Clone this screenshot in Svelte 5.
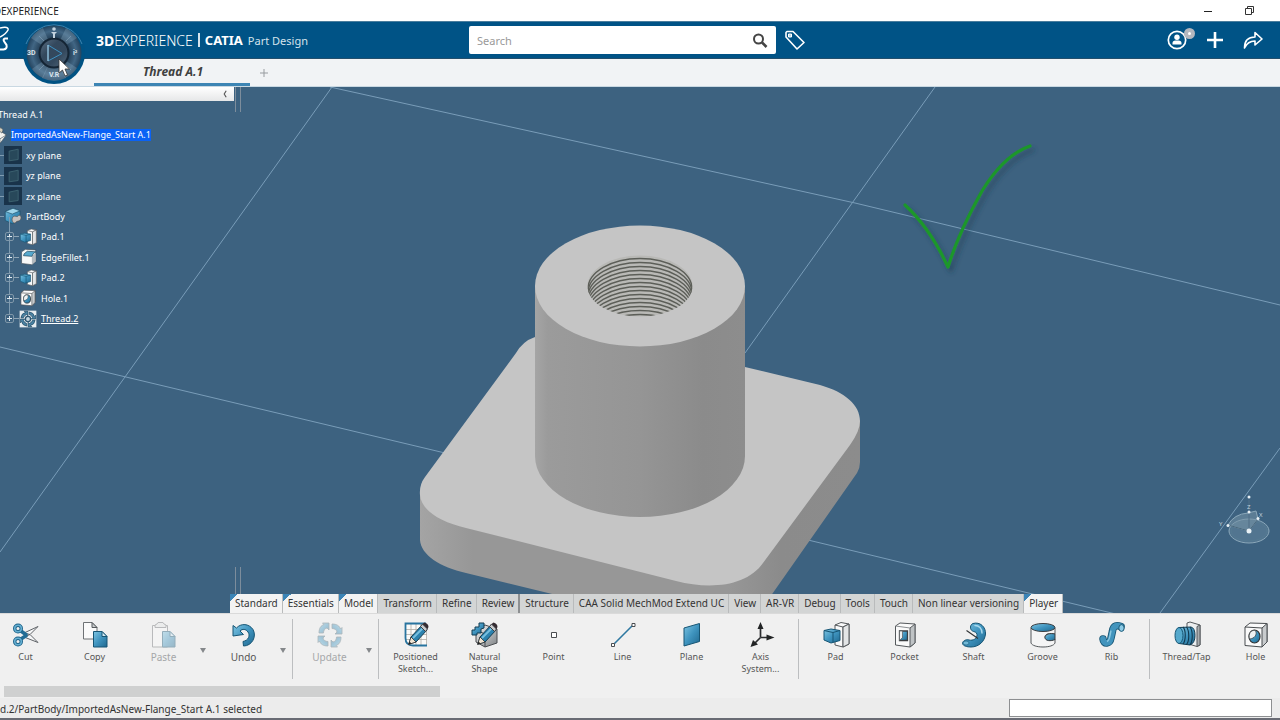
<script>
  const tree = [
    { label: 'Thread A.1', level: 0 },
    { label: 'ImportedAsNew-Flange_Start A.1', level: 1, icon: 'product', selected: true },
    { label: 'xy plane', level: 2, icon: 'datum' },
    { label: 'yz plane', level: 2, icon: 'datum' },
    { label: 'zx plane', level: 2, icon: 'datum' },
    { label: 'PartBody', level: 2, icon: 'body' },
    { label: 'Pad.1', level: 3, icon: 'pad' },
    { label: 'EdgeFillet.1', level: 3, icon: 'fillet' },
    { label: 'Pad.2', level: 3, icon: 'pad' },
    { label: 'Hole.1', level: 3, icon: 'hole' },
    { label: 'Thread.2', level: 3, icon: 'thread2', current: true }
  ];

  const sections = [
    { label: 'Standard', open: true },
    { label: 'Essentials', open: true },
    { label: 'Model', open: true },
    { label: 'Transform' },
    { label: 'Refine' },
    { label: 'Review', strong: true },
    { label: 'Structure' },
    { label: 'CAA Solid MechMod Extend UC' },
    { label: 'View' },
    { label: 'AR-VR' },
    { label: 'Debug' },
    { label: 'Tools' },
    { label: 'Touch' },
    { label: 'Non linear versioning' },
    { label: 'Player', open: true }
  ];

  const groups = [
    [
      { label: 'Cut', icon: 'cut' },
      { label: 'Copy', icon: 'copy' },
      { label: 'Paste', icon: 'paste', off: true, more: true },
      { label: 'Undo', icon: 'undo', large: true, more: true }
    ],
    [{ label: 'Update', icon: 'update', off: true, more: true }],
    [
      { label: 'Positioned Sketch...', icon: 'sketch' },
      { label: 'Natural Shape', icon: 'natural' },
      { label: 'Point', icon: 'point' },
      { label: 'Line', icon: 'line' },
      { label: 'Plane', icon: 'plane' },
      { label: 'Axis System...', icon: 'axis' }
    ],
    [
      { label: 'Pad', icon: 'pad' },
      { label: 'Pocket', icon: 'pocket' },
      { label: 'Shaft', icon: 'shaft' },
      { label: 'Groove', icon: 'groove' },
      { label: 'Rib', icon: 'rib' }
    ],
    [
      { label: 'Thread/Tap', icon: 'tap' },
      { label: 'Hole', icon: 'hole' }
    ]
  ];

  const threads = Array.from({ length: 15 }, (_, i) => 289 + i * 4);
</script>

{#snippet icon(name)}
  <svg class="icon" viewBox="0 0 28 28" aria-hidden="true">
    {#if name === 'cut'}
      <g fill="none" stroke="#606468" stroke-linejoin="round">
        <path d="M12 12 26 5.500 18 13.500zM12 16l14 5.500-8-8z" fill="#f6f7f8" />
        <path d="M9 10l6 4.500M9 18l6-4" stroke="#236d95" stroke-width="3.500" />
        <circle cx="6" cy="7.500" r="3.300" stroke="#1d638a" stroke-width="3.400" />
        <circle cx="6" cy="20.500" r="3.300" stroke="#1d638a" stroke-width="3.400" />
        <circle cx="6" cy="7.500" r="3.300" stroke="#67b0d2" stroke-width="1.600" />
        <circle cx="6" cy="20.500" r="3.300" stroke="#67b0d2" stroke-width="1.600" />
      </g>
    {:else if name === 'copy'}
      <path d="M2.500 1.500H11l5 5V18H2.500z" fill="#fafafa" stroke="#6e7275" />
      <path d="M11 1.500v5h5z" fill="#c9ccce" stroke="#55595c" />
      <path d="M12.500 10.500H21l5 5V26H12.500z" fill="url(#blue)" stroke="#165574" />
      <path d="M21 10.500v5h5z" fill="#d3ebf5" stroke="#165574" />
    {:else if name === 'paste'}
      <path d="M2.500 4.500h15V26h-15z" fill="#fafafa" stroke="#6e7275" />
      <path d="M5 6.500V4l2-1 1-1.500h5l1 1.500 2 1v2.500z" fill="#e5e7e8" stroke="#6e7275" />
      <path d="M12.500 10.500H20l5 5V26H12.500z" fill="url(#blue)" stroke="#165574" />
      <path d="M20 10.500v5h5z" fill="#d3ebf5" stroke="#165574" />
    {:else if name === 'undo'}
      <path d="M3 4.500 6.500 7C11 2 19 2.500 23 8.500c4 7-1 16.500-9.500 16.500l-.5-4.500c5.500-1 7.500-6 5-9.500-2-3-5.500-3.500-8-1l3.500 3.500L3 15z" fill="url(#blue)" stroke="#165574" stroke-linejoin="round" />
    {:else if name === 'update'}
      <g fill="url(#blue)" stroke="#4e6470" stroke-width=".8" stroke-linejoin="round">
        {#each [0, 90, 180, 270] as turn}
          <path d="M3 12c0-5 2-7.500 5-8.500L6.500 2H13v7l-2-2c-2 .5-3.500 2-3.500 5z" transform="rotate({turn} 14 14)" />
        {/each}
      </g>
    {:else if name === 'sketch'}
      <path d="M4 3.500h21v21H12c-5 0-8-3-8-8z" fill="#fbfaf8" />
      <path d="M9 3v20M14 3v22M19 3v22M24.500 3v22M3 8.500h22M3 13.500h22M3 18.500h22" stroke="#b1aca5" stroke-width=".8" />
      <path d="M24 2.500H3.500V17q0 7.500 7.500 7.500h14" fill="none" stroke="#28749f" stroke-width="1.800" />
      {@render pencil()}
    {:else if name === 'natural'}
      <path d="m5 8 9-4 12 4v14l-12 4-9-5z" fill="url(#steel)" stroke="#4a4d50" />
      <path d="m5 9 9 4 12-5M14 13v13" fill="none" stroke="#4a4d50" />
      <path d="M1 9h3V6h4V2h5v5l-3 1v4H6v2H1z" fill="url(#blue)" stroke="#123c52" stroke-linejoin="round" />
      {@render pencil()}
    {:else if name === 'point'}
      <path d="M11.500 11.500h5v5h-5z" fill="#fff" stroke="#4a4d50" />
    {:else if name === 'line'}
      <path d="M4 24 24 4" stroke="#2e78a1" stroke-width="1.600" />
      <path d="M2.500 22.500h3v3h-3zM23 2.500h3v3h-3z" fill="#fff" stroke="#4a4d50" />
    {:else if name === 'plane'}
      <path d="m6 7 15.500-4.500v18L6 25z" fill="url(#blue)" stroke="#165574" />
    {:else if name === 'axis'}
      <path d="M13.500 16V5M13.500 16.500H24M13.500 16.500 7 23" fill="none" stroke="#2b2d2f" stroke-width="1.700" />
      <path d="m13.500 1 3 7h-6zM27.500 16.500l-8-3v6zM3.500 26l2.500-7 5 4.500z" fill="#222425" />
    {:else if name === 'pad'}
      <path d="m13 4 6-2.500 8 1.500v20l-6 3-8-2z" fill="#fafafa" stroke="#55595c" />
      <path d="m13 4 8 2 6-3M21 6v20" fill="none" stroke="#55595c" />
      <path d="m21 6 6-3v20l-6 3z" fill="#e3e5e6" stroke="#55595c" />
      <path d="M2 9.500 9 8l9 1.500v10L9 22l-7-3z" fill="url(#blue)" stroke="#165574" />
      <path d="m2 9.500 9 2 7-2M11 11.500v10" fill="none" stroke="#165574" />
    {:else if name === 'pocket'}
      <path d="M4.500 5 9 2l15 1v19l-5 4-14.500-2z" fill="#fafafa" stroke="#55595c" stroke-linejoin="round" />
      <path d="m19 7 5-4v19l-5 4z" fill="#bfc3c5" stroke="#55595c" />
      <path d="m4.500 5 14.500 2" stroke="#8a8e91" />
      <path d="M8.500 10h8v9.500h-8z" fill="url(#blue)" stroke="#3b3e41" stroke-width="1.300" />
      <path d="m8.500 19.500 3.500-3.500h-.5V10h-3z" fill="#eef0f1" stroke="#55595c" stroke-width=".7" />
    {:else if name === 'shaft'}
      <path d="M13 2.500C20 .5 26 6 25.500 13S19 26 11 26c-4 0-8-1-8.500-3.500C2.500 20 6 18 9 19c4 1 8.500-1.500 8-5.500-.4-3-3-2.500-4.500-3.500-3-1.500-2.500-6.500.5-7.500z" fill="url(#blue)" stroke="#165574" />
      <path d="M15 4.500c4 0 7 3 7 7.500" fill="none" stroke="#a9d9ed" stroke-width="1.500" stroke-linecap="round" />
      <path d="m6.500 9.500 11.500 8" stroke="#303335" stroke-width="1.100" />
      <ellipse cx="6" cy="22" rx="3" ry="2" fill="#70b8d7" stroke="#165574" stroke-width=".6" />
    {:else if name === 'groove'}
      <path d="M2 7v15c1 2.500 6 4 12 4s11-1.500 12-4v-4c-4 2-10 1.500-10-2s5-4 10-3V7z" fill="#f5f5f5" stroke="#55595c" />
      <path d="M26 13c-5-1-10 0-10 3.500s6 4 10 2z" fill="url(#blue)" stroke="#3b3e41" />
      <ellipse cx="14" cy="6.500" rx="12" ry="4" fill="url(#blue)" stroke="#3b3e41" />
    {:else if name === 'rib'}
      <path d="M5 18c.5 6 7 5 8-1l1.500-7C15.500 4 19 4 23 5.500" fill="none" stroke="#165574" stroke-width="7.500" stroke-linecap="round" />
      <path d="M5 18c.5 6 7 5 8-1l1.500-7C15.500 4 19 4 23 5.500" fill="none" stroke="#4294bd" stroke-width="5.800" stroke-linecap="round" />
      <path d="M9 20.500c2-1 2.500-3 3-6l1-5" fill="none" stroke="#8cc9e2" stroke-width="1.400" />
      <ellipse cx="23.500" cy="7" rx="2.700" ry="3.400" fill="#8ccbe6" stroke="#165574" />
    {:else if name === 'tap'}
      <path d="m14 2 3-1 10 3v20l-3 1.500-10-3z" fill="#eceeef" stroke="#55595c" />
      <path d="m24 5.500 3-1.500v20l-3 1.500z" fill="#a9adb0" stroke="#55595c" />
      <path d="M6 6.500 18 6q4 1 4 8.500T17 24L6 22.500z" fill="url(#blue)" stroke="#123c52" />
      <path d="M10 6c3 3 3 13 0 17M13.500 6c3 4 3 14 0 17.500M17 6c3 4 3 14 0 18" fill="none" stroke="#10384e" stroke-width="1.100" />
      <ellipse cx="6" cy="14.500" rx="4" ry="8" fill="#55a9cd" stroke="#165574" />
    {:else if name === 'hole'}
      <path d="m3 6 5-4 17 .5V21l-5 5-17-1.500z" fill="#fafafa" stroke="#494d50" stroke-linejoin="round" />
      <path d="m20 7 5-4.500V21l-5 5z" fill="#c8cbcd" stroke="#494d50" />
      <path d="m3 6 17 1" stroke="#494d50" />
      <ellipse cx="12.500" cy="15.500" rx="5.500" ry="6.500" fill="url(#blue)" stroke="#303335" stroke-width="1.200" />
      <path d="M13.500 9.500c2 4.500-1 8-6 8.500-1.500-5 1.500-9.500 6-8.500z" fill="#eff2f3" stroke="#303335" stroke-width=".7" />
    {:else if name === 'datum'}
      <path d="M0 0h28v28H0z" fill="#19334a" />
      <path d="m8 8 14-3v16L8 23z" fill="#28485a" stroke="#3c6270" stroke-width="1.500" />
    {:else if name === 'body'}
      <path d="m2 7 12-5 11 4v14l-12 6-11-5z" fill="url(#blue)" stroke="#1c4c67" />
      <path d="m2 7 11 4 12-5-11-4z" fill="#9fd5ea" stroke="#1c4c67" />
      <path d="M13 17c3-6 7 0 9-3s6 1 4 5-6 2-8 5-7-2-5-7z" fill="#c6c2bf" stroke="#5b5350" />
    {:else if name === 'fillet'}
      <path d="m4 6 6-4 16 1v18l-6 5-16-2z" fill="#f7f8f8" stroke="#3d4a54" />
      <path d="m20 12 6-4v13l-6 5z" fill="#b3b9be" />
      <path d="m7 12 1-3 5-4 13 1-4 3-2 4z" fill="#56a8cd" stroke="#153c52" />
    {:else if name === 'thread2'}
      <path d="M1 1h26v26H1z" fill="#e8edf0" />
      <g fill="#4b83a3" stroke="#173e59" stroke-width="1">
        {#each [0, 90, 180, 270] as turn}
          <path d="M3 12q1-7 7-8l-2-2h6v7l-2-2q-4 1-5 5z" transform="rotate({turn} 14 14)" />
        {/each}
      </g>
      <circle cx="14" cy="14" r="4" fill="#c6d7e1" stroke="#2d5570" stroke-width="2" />
    {:else if name === 'product'}
      <path d="m2 12 9-6 7 2 9 6-9 12-15-7z" fill="#f4f3ef" stroke="#40505b" />
      <path d="m2 12 15 8 10-6M17 20v5" fill="none" stroke="#40505b" />
      <path d="m15 7 3-5 4 4-2 5z" fill="#d8cfbd" stroke="#40505b" />
    {/if}
  </svg>
{/snippet}

{#snippet pencil()}
  <path d="m9 16 11-12 5 5-11 12-7 2z" fill="#2c82ae" stroke="#123c52" stroke-linejoin="round" />
  <path d="m11 17 11-11" stroke="#79c0df" stroke-width="1.800" />
  <path d="m18.500 5.500 2-2.500 5 5-2 2.500z" fill="#c8cbcd" stroke="#3b3e41" />
  <path d="m20.500 3 2-1.500q4 1 4 4.500l-1 2z" fill="#352c31" />
  <path d="m9 16 5 5-7.500 2.500z" fill="#f0e4d3" stroke="#303335" stroke-width=".8" />
  <path d="m6.500 23.500 1-3 2 2z" fill="#222" />
{/snippet}

<svg class="defs" aria-hidden="true">
  <defs>
    <linearGradient id="blue" x1="0" y1="0" x2="1" y2="1">
      <stop offset="0" stop-color="#7fc5e2" />
      <stop offset=".5" stop-color="#3f94bf" />
      <stop offset="1" stop-color="#20688f" />
    </linearGradient>
    <linearGradient id="steel" x1="0" y1="0" x2="1" y2="1">
      <stop offset="0" stop-color="#f5f5f5" />
      <stop offset="1" stop-color="#7d8184" />
    </linearGradient>
  </defs>
</svg>

<div class="app">
  <div class="titlebar">
    <span class="window-title">3DEXPERIENCE</span>
    <button aria-label="Minimize"><svg viewBox="0 0 12 12"><path d="M2 6.500h8" stroke="#222" /></svg></button>
    <button aria-label="Restore"><svg viewBox="0 0 12 12"><path d="M2.500 3.500h6v6h-6zM4.500 3.500v-2h6v6h-2" fill="none" stroke="#333" /></svg></button>
  </div>

  <header>
    <svg class="logo" viewBox="0 0 10 28" aria-hidden="true">
      <path d="M0 2Q9 0 8 4Q6 8 0 11" fill="none" stroke="#fff" stroke-width="1.500" />
      <path d="M8 12.500H5q-2.500 .5-.5 3.500l2 3q1 4-3 4.500H0" fill="none" stroke="#fff" stroke-width="2" />
    </svg>
    <button class="compass" aria-label="Compass">
      <svg viewBox="0 0 64 64">
        <defs>
          <radialGradient id="dial"><stop offset=".45" stop-color="#1b3349" /><stop offset=".8" stop-color="#416684" /><stop offset="1" stop-color="#24435e" /></radialGradient>
          <linearGradient id="sheen" x1="0" y1="0" x2="1" y2="1"><stop offset="0" stop-color="#8fa9bd" /><stop offset=".35" stop-color="#253f57" /><stop offset=".65" stop-color="#253f57" /><stop offset="1" stop-color="#7593ab" /></linearGradient>
        </defs>
        <circle cx="32" cy="32" r="31" fill="#005283" />
        <path d="M4 23A30 30 0 0 1 60 23" fill="none" stroke="#3b83b0" />
        <circle cx="32" cy="32" r="27.500" fill="url(#dial)" />
        <path d="M32 32 9 17a27.500 27.500 0 0 1 12-10zM32 32l23 15a27.500 27.500 0 0 1-12 10zM32 32l12-25a27.500 27.500 0 0 1 11 10zM32 32 21 57A27.500 27.500 0 0 1 10 48z" fill="#9bb9cf" opacity=".28" />
        <path d="M32 32 20 57a27.500 27.500 0 0 0 24 0z" fill="#9bb9cf" opacity=".3" />
        <path d="m17 15 5 5M49 15l-5 5M17 49l5-5M49 49l-5-5" stroke="#86a3b9" opacity=".6" />
        <circle cx="32" cy="32" r="14.500" fill="#3b4d60" stroke="#142535" stroke-width="2" />
        <circle cx="32" cy="32" r="13" fill="url(#sheen)" opacity=".35" />
        <path d="M26 24v16l14-7.500z" fill="none" stroke="#3e91c2" />
        <path d="M26 24v16" stroke="#b6d3e5" />
        <circle cx="32" cy="8" r="1.800" fill="#c3d2de" />
        <path d="M29 11h6l-2 2v4h-2v-4z" fill="#c3d2de" />
        <text x="5" y="34">3D</text><text x="51" y="34">i²</text><text x="27" y="56">V.R</text>
      </svg>
    </button>
    <div class="brand"><b>3D</b>EXPERIENCE<i></i><b class="product">CATIA</b><small>Part Design</small></div>
    <div class="search">
      <input type="search" placeholder="Search" aria-label="Search" />
      <button aria-label="Run search"><svg viewBox="0 0 16 16"><circle cx="6.500" cy="7" r="4.500" fill="none" stroke="#444" stroke-width="2" /><path d="m10 10.500 4.500 4.500" stroke="#444" stroke-width="2.600" /></svg></button>
    </div>
    <button class="tool tag" aria-label="Tags"><svg viewBox="0 0 20 20"><path d="M1 2.500V7l11 12 7-6.500L8 1.500H2z" fill="none" stroke="#fff" stroke-width="1.600" stroke-linejoin="round" /><path d="M3.500 4h3v3h-3z" fill="#b7d2e3" stroke="#fff" /></svg></button>
    <div class="actions">
      <button class="tool" aria-label="My profile">
        <svg viewBox="0 0 20 20"><circle cx="10" cy="10" r="8.700" fill="none" stroke="#fff" stroke-width="1.700" /><circle cx="10" cy="7.300" r="2.700" fill="#fff" /><path d="M5.500 14.500v-1.500q0-2.500 3-2.500h3q3 0 3 2.500v1.500z" fill="#fff" /></svg>
        <span class="badge"></span>
      </button>
      <button class="tool" aria-label="Add"><svg viewBox="0 0 20 20"><path d="M10 2v16M2 10h16" stroke="#fff" stroke-width="2.600" /></svg></button>
      <button class="tool" aria-label="Share"><svg viewBox="0 0 20 20"><path d="M1.500 18C1.500 10 5 7 12 7V2.500l7 6.500-7 6v-4C7 11 4 12.500 1.500 18z" fill="none" stroke="#fff" stroke-width="1.600" stroke-linejoin="round" /></svg></button>
    </div>
  </header>

  <nav class="tabs">
    <button class="doc-tab">Thread A.1</button>
    <button class="new-tab" aria-label="New tab"><svg viewBox="0 0 10 10"><path d="M5 1v8M1 5h8" stroke="#979b9f" /></svg></button>
  </nav>

  <main>
    <svg class="scene" viewBox="0 87 1280 526" preserveAspectRatio="xMidYMid slice" aria-hidden="true">
      <defs>
        <linearGradient id="tube"><stop offset="0" stop-color="#a5a5a5" /><stop offset=".06" stop-color="#9b9b9b" /><stop offset=".5" stop-color="#959595" /><stop offset=".8" stop-color="#8b8b8b" /><stop offset="1" stop-color="#8d8d8d" /></linearGradient>
        <linearGradient id="front"><stop offset="0" stop-color="#a4a4a4" /><stop offset=".12" stop-color="#979797" /><stop offset=".7" stop-color="#979797" /><stop offset=".82" stop-color="#8b8b8b" /><stop offset="1" stop-color="#8c8c8c" /></linearGradient>
        <clipPath id="bore"><ellipse cx="640" cy="286" rx="52.500" ry="30.500" /></clipPath>
        <filter id="shade" x="-20%" y="-20%" width="150%" height="150%"><feDropShadow dx="3" dy="4" stdDeviation="2.500" flood-color="#203a50" flood-opacity=".6" /></filter>
      </defs>
      <g class="grid">
        <path d="M332 87 0 552M935 87 745 353M1280 448 1160 613" />
        <path d="M330 87 855 203 1280 305M0 347l445 106M808 540l312 75" />
      </g>
      <path d="M420 494v46c1 15 20 27 46 33l234 57h47l110-157q3-5 3-11v-41z" fill="url(#front)" />
      <path d="M745 367H640L535 337q-12 4-19 16l-91 124q-6 8-5 18c1 15 20 27 46 33l210 53c35 9 71 5 87-18l87-118q10-14 10-24c0-16-15-29-40-36z" fill="#c5c5c5" />
      <path d="M535 286v170a105 61 0 0 0 210 0V286z" fill="url(#tube)" />
      <ellipse cx="640" cy="286" rx="105" ry="60.500" fill="#c5c5c5" />
      <g clip-path="url(#bore)">
        <path d="M585 250h110v70H585z" fill="#b9b9b6" />
        {#each threads as y}
          <path d="M588 {y}a52 30.500 0 0 1 104 0" fill="none" stroke="#5c5e58" stroke-width="1.300" />
        {/each}
      </g>
      <path d="M905 205q25 23 43 62 10-33 34-76 22-36 48-45" fill="none" stroke="#1d972b" stroke-width="3.200" stroke-linecap="round" stroke-linejoin="round" filter="url(#shade)" />
      <g fill="none" stroke="#8ba8ba">
        <ellipse cx="1249" cy="531" rx="20" ry="12" fill="#6788a0" fill-opacity=".5" />
        <ellipse cx="1249" cy="531" rx="18" ry="10" stroke="#557a92" />
        <path d="M1228 525q6-11 20-12l8-2 2 8-9 12z" fill="#7693a6" fill-opacity=".55" />
        <path d="m1228 525 21 6 9-12" stroke="#47657a" />
        <path d="M1249 530v-30" stroke="#506f86" />
      </g>
      <g fill="#e9f1f6"><circle cx="1249" cy="531" r="2.500" /><circle cx="1228" cy="525.500" r="1.500" /><circle cx="1258" cy="518.500" r="1.500" /><circle cx="1249" cy="512" r="1.500" /><circle cx="1249" cy="497" r="1.500" /></g>
      <g class="axis-names"><text x="1247" y="509">Z</text><text x="1259" y="517">X</text><text x="1219" y="526">Y</text></g>
    </svg>

    <aside>
      <div class="panel-head"><button aria-label="Collapse tree"><svg viewBox="0 0 6 10"><path d="M4.500 1 2 5l2.500 4" fill="none" stroke="#555" stroke-width="1.400" /></svg></button></div>
      <ul>
        {#each tree as node}
          <li class="level{node.level}">
            {#if node.level === 3}<span class="expander"></span>{/if}
            {#if node.icon}{@render icon(node.icon)}{/if}
            <span class="name" class:selected={node.selected} class:current={node.current}>{node.label}</span>
          </li>
        {/each}
      </ul>
    </aside>

    <nav class="sections">
      {#each sections as s}
        <button class:open={s.open} class:strong={s.strong}>{s.label}</button>
      {/each}
    </nav>
  </main>

  <div class="ribbon">
    {#each groups as group}
      <div class="group">
        {#each group as cmd}
          <button class="cmd" class:off={cmd.off} class:large={cmd.off || cmd.large} disabled={cmd.off}>
            {@render icon(cmd.icon)}
            <span>{cmd.label}</span>
          </button>
          {#if cmd.more}
            <button class="more" aria-label="More {cmd.label} commands"><svg viewBox="0 0 6 5"><path d="M0 0h6L3 5z" fill="#85888b" /></svg></button>
          {/if}
        {/each}
      </div>
    {/each}
  </div>
  <div class="scroll"><div class="thumb"></div></div>

  <footer>
    <span class="status">d.2/PartBody/ImportedAsNew-Flange_Start A.1 selected</span>
    <input type="text" aria-label="Command" />
  </footer>
  <svg class="cursor" viewBox="0 0 12 19" aria-hidden="true"><path d="M1 1v14l3.500-3L7 18l2.500-1L7 11h4.500z" fill="#fff" stroke="#333" stroke-width=".8" /></svg>
</div>

<style>
  :global(body) { margin: 0; }
  * { box-sizing: border-box; }
  button { font: inherit; color: inherit; border: 0; padding: 0; background: none; }
  svg { display: block; }
  .defs { position: absolute; width: 0; height: 0; }

  .app {
    position: relative;
    display: flex;
    flex-direction: column;
    height: 100vh;
    overflow: hidden;
    font-family: "Noto Sans", "Open Sans", sans-serif;
    font-size: 9px;
    color: #333;
    background: #f0f0f0;
  }

  .titlebar { display: flex; align-items: center; height: 21px; padding-right: 11px; background: #fff; color: #222; font-size: 10px; }
  .window-title { flex: 1; margin-left: -12px; }
  .titlebar button { display: grid; place-items: center; width: 41px; height: 20px; }
  .titlebar svg { width: 12px; height: 12px; }

  header { position: relative; display: flex; align-items: center; height: 38px; padding-right: 8px; background: #005386; border-top: 1px solid #4a7d9d; border-bottom: 1px solid #234f6d; color: #fff; }
  .logo { width: 10px; height: 28px; }
  .compass { position: absolute; z-index: 2; left: 22px; top: -1px; width: 64px; height: 64px; }
  .compass text { font: bold 7px "Roboto", sans-serif; fill: #dbe4eb; }
  .brand { display: flex; align-items: center; flex: 0 0 373px; margin-left: 86px; font-size: 14px; font-weight: 300; white-space: nowrap; }
  .brand b { font-weight: 700; }
  .brand i { width: 2px; height: 14px; margin: 0 5px; background: #d5e3ec; }
  .brand .product { font-size: 13px; }
  .brand small { margin-left: 5px; font-size: 11px; font-weight: 400; color: #d5e3ec; }
  .search { display: flex; align-items: center; flex: 0 1 307px; height: 28px; padding: 0 8px; border-radius: 2px; background: #fff; }
  .search input { flex: 1; min-width: 0; padding: 0; border: 0; outline: 0; background: none; font: 11px "Noto Sans", sans-serif; }
  .search input::placeholder { color: #999; opacity: 1; }
  .search svg { width: 16px; height: 16px; }
  .tool { position: relative; display: grid; place-items: center; width: 38px; height: 36px; }
  .tool svg { width: 20px; height: 20px; }
  .actions { display: flex; margin-left: auto; }
  .badge { position: absolute; right: 1px; top: 6px; width: 11px; height: 11px; border: 4px solid #b3b7bf; border-radius: 50%; background: #fff; }

  .tabs { display: flex; height: 28px; padding-left: 94px; background: #f1f3f5; border-bottom: 1px solid #c9d8e2; }
  .doc-tab { width: 156px; padding-left: 2px; border-bottom: 3px solid #3d85b4; font-size: 12px; font-weight: 700; font-style: italic; line-height: 26px; color: #404040; }
  .new-tab { display: grid; place-items: center; width: 27px; }
  .new-tab svg { width: 10px; height: 10px; }

  main { position: relative; flex: 1; min-height: 0; display: flex; flex-direction: column; justify-content: space-between; background: #3d6280; }
  .scene { position: absolute; inset: 0; width: 100%; height: 100%; }
  .grid { fill: none; stroke: #8db0cb; stroke-width: 1; opacity: .75; }
  .axis-names { font: 6px "Noto Sans", sans-serif; fill: #c2d3de; }

  aside { position: relative; width: 239px; color: #fff; }
  .panel-head { display: flex; justify-content: flex-end; align-items: center; height: 14px; width: 234px; padding-right: 6px; background: linear-gradient(#fff, #e6e7e8); }
  .panel-head svg { width: 6px; height: 8px; }
  aside::after, .sections::before { content: ""; position: absolute; left: 235px; top: 0; width: 4px; height: 25px; border: solid #7d8d9c; border-width: 0 1px; }
  ul { display: grid; grid-auto-rows: 1fr; height: 225px; margin: 3px 0 0; padding: 0; list-style: none; }
  li { position: relative; display: flex; align-items: center; white-space: nowrap; }
  li .icon { flex: none; width: 18px; height: 18px; margin-right: 4px; }
  .level0 { margin-left: -2px; }
  .level1 { margin-left: -11px; }
  .level2 { padding-left: 4px; }
  .level2::before { content: ""; position: absolute; left: 0; width: 4px; border-top: 1px solid #7f9bb0; }
  .level3 { padding-left: 5px; }
  .level3::before { content: ""; position: absolute; left: 9px; top: -10px; bottom: 10px; border-left: 1px solid #7f9bb0; }
  .expander { position: relative; width: 9px; height: 9px; margin-right: 5px; border: 1px solid #7f97a9; border-radius: 2px; background: linear-gradient(#dfe8ee, #dfe8ee) center / 5px 1px no-repeat, linear-gradient(#dfe8ee, #dfe8ee) center / 1px 5px no-repeat, #3d6280; }
  .expander::after { content: ""; position: absolute; left: 8px; top: 3px; width: 5px; border-top: 1px solid #8fa5b5; }
  .selected { background: #0a62f5; line-height: 12px; }
  .current { text-decoration: underline; }

  .sections { position: relative; display: flex; height: 19px; padding-left: 230px; color: #333; font-size: 10px; }
  .sections::before { top: -27px; height: 27px; }
  .sections button { position: relative; padding: 0 4px 0 5px; background: #d3d5d5; border-right: 1px solid #b9bbbc; line-height: 19px; white-space: nowrap; }
  .sections .strong { border-right: 2px solid #8d9092; }
  .sections .open { background: #f3f3f3; }
  .open::before { content: ""; position: absolute; left: 0; top: 0; width: 8px; height: 8px; background: linear-gradient(135deg, #3b84b6 50%, transparent 50%); }

  .ribbon { display: flex; height: 73px; margin-left: -9px; border-top: 1px solid #dadada; color: #555; }
  .group { display: flex; flex: none; }
  .group + .group::before { content: ""; width: 1px; height: 60px; margin: 5px 2px 0 3px; background: #bcbec0; }
  .cmd { display: flex; flex-direction: column; align-items: center; width: 69px; padding-top: 7px; line-height: 12px; }
  .cmd .icon { width: 28px; height: 28px; margin-bottom: 2px; }
  .cmd span { max-width: 54px; }
  .large { font-size: 10px; }
  .off { color: #a5a7a9; }
  .off .icon { opacity: .42; }
  .more { width: 11px; padding-left: 2px; }
  .more svg { width: 6px; height: 5px; }

  .scroll { height: 12px; padding: 0 4px; }
  .thumb { width: 436px; max-width: 100%; height: 11px; background: #cfd0d0; }
  footer { display: flex; align-items: center; justify-content: space-between; height: 22px; padding-right: 8px; border-bottom: 2px solid #696b74; background: #ececec; color: #333; font-size: 10px; }
  footer input { width: 263px; height: 18px; border: 1px solid #8d8f91; background: #fff; }
  .status { white-space: nowrap; padding-top: 2px; }
  .cursor { position: absolute; z-index: 3; left: 58px; top: 58px; width: 12px; height: 19px; }
</style>
